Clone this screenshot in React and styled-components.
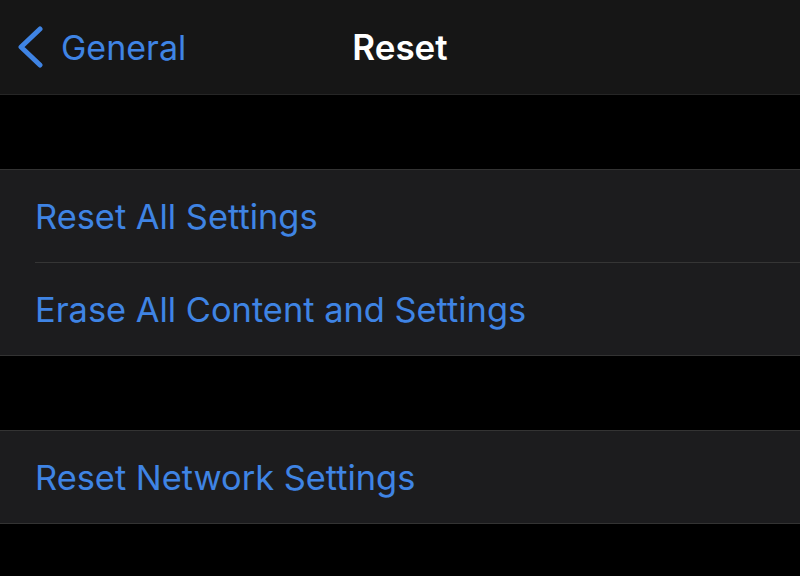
import React from 'react'
import styled, { createGlobalStyle } from 'styled-components'

const GlobalStyle = createGlobalStyle`
  html, body {
    margin: 0;
    padding: 0;
    background: #000;
  }
  body {
    font-family: Inter, "Liberation Sans", sans-serif;
    -webkit-font-smoothing: antialiased;
  }
`

const Screen = styled.div`
  width: 800px;
  height: 576px;
  background: #000;
  overflow: hidden;
`

const NavBar = styled.header`
  position: relative;
  height: 94px;
  background: #161616;
  border-bottom: 1px solid #262626;
  display: flex;
  align-items: center;
  justify-content: center;
`

const BackButton = styled.div`
  position: absolute;
  left: 16px;
  top: 0;
  height: 94px;
  display: flex;
  align-items: center;
  gap: 17px;
  color: #3f84e4;
  font-size: 34px;
  svg {
    display: block;
  }
`

const Title = styled.h1`
  margin: 0;
  color: #fff;
  font-size: 35px;
  font-weight: 600;
`

const Spacer = styled.div`
  height: ${(p) => p.h}px;
`

const Group = styled.section`
  background: #1c1c1e;
  border-top: 1px solid #333;
  border-bottom: 1px solid #333;
`

const Row = styled.div`
  height: 92px;
  display: flex;
  align-items: center;
  margin-left: 35px;
  color: #3f84e4;
  font-size: 34.4px;
  border-top: ${(p) => (p.first ? 'none' : '1px solid #353535')};
`

const groups = [
  ['Reset All Settings', 'Erase All Content and Settings'],
  ['Reset Network Settings'],
]

export default function App() {
  return (
    <Screen>
      <GlobalStyle />
      <NavBar>
        <BackButton>
          <svg width="28" height="42" viewBox="0 0 28 42">
            <path
              d="M24 3 L5 21 L24 39"
              fill="none"
              stroke="#3f84e4"
              strokeWidth="5"
              strokeLinecap="round"
              strokeLinejoin="round"
            />
          </svg>
          <span>General</span>
        </BackButton>
        <Title>Reset</Title>
      </NavBar>
      {groups.map((rows, gi) => (
        <React.Fragment key={gi}>
          <Spacer h={74} />
          <Group>
            {rows.map((label, ri) => (
              <Row key={label} first={ri === 0}>
                {label}
              </Row>
            ))}
          </Group>
        </React.Fragment>
      ))}
    </Screen>
  )
}
